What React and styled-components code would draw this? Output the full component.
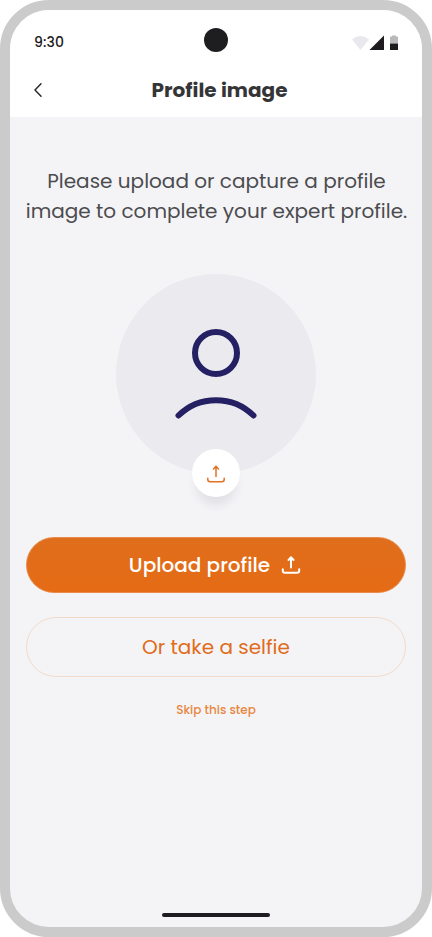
import styled, { createGlobalStyle } from 'styled-components';

const GlobalStyle = createGlobalStyle`
  * {
    box-sizing: border-box;
  }

  body {
    margin: 0;
    background: #ffffff;
    font-family: Poppins, Inter, 'Liberation Sans', sans-serif;
  }

  button {
    font-family: inherit;
    cursor: pointer;
  }
`;

const Phone = styled.div`
  display: flex;
  flex-direction: column;
  width: 432px;
  height: 937px;
  border: 10px solid #cbcbcb;
  border-radius: 49px;
  background: #f4f4f7;
  overflow: hidden;
`;

const Header = styled.header`
  background: #ffffff;
  height: 107px;
`;

const StatusBar = styled.div`
  display: grid;
  grid-template-columns: 1fr 24px 1fr;
  align-items: center;
  height: 60px;
  padding: 0 24px;
`;

const Clock = styled.span`
  padding-top: 4px;
  font-size: 14px;
  font-weight: 500;
  line-height: 20px;
  letter-spacing: 0.1px;
  color: #1d1b20;
`;

const Camera = styled.span`
  width: 24px;
  height: 24px;
  border-radius: 50%;
  background: #1e1e20;
`;

const StatusIcons = styled.svg`
  justify-self: end;
  margin-top: 6px;
`;

const NavBar = styled.div`
  display: grid;
  grid-template-columns: 40px 1fr 33px;
  align-items: center;
  height: 40px;
  padding: 0 8px;
`;

const BackButton = styled.button`
  display: flex;
  justify-content: center;
  padding: 0;
  border: none;
  background: none;
`;

const Title = styled.h1`
  margin: 0;
  text-align: center;
  font-size: 20px;
  font-weight: 700;
  line-height: 30px;
  color: #353538;
`;

const Content = styled.main`
  flex: 1;
  display: flex;
  flex-direction: column;
  align-items: center;
  padding: 49px 16px 0;
`;

const Intro = styled.p`
  margin: 0;
  padding-left: 1px;
  text-align: center;
  font-size: 20px;
  line-height: 30px;
  white-space: nowrap;
  color: #4c4c4f;
`;

const IntroLine = styled.span`
  display: block;
`;

const Avatar = styled.div`
  position: relative;
  display: flex;
  justify-content: center;
  width: 200px;
  height: 200px;
  margin-top: 48px;
  border-radius: 50%;
  background: #ebebef;
`;

const AvatarUpload = styled.button`
  position: absolute;
  left: 76px;
  bottom: -23px;
  display: flex;
  align-items: center;
  justify-content: center;
  width: 48px;
  height: 48px;
  padding: 2px 0 0;
  border: none;
  border-radius: 50%;
  background: #ffffff;
  color: #e27124;
  box-shadow: 0 12px 10px -4px rgba(40, 40, 50, 0.09);
`;

const PrimaryButton = styled.button`
  display: flex;
  align-items: center;
  justify-content: center;
  gap: 9px;
  width: 380px;
  height: 56px;
  margin-top: 63px;
  padding: 0;
  border: 1px solid #e98a48;
  border-radius: 28px;
  background: linear-gradient(#df6e1c, #e66b15);
  font-size: 20px;
  font-weight: 500;
  color: #ffffff;
`;

const SecondaryButton = styled.button`
  width: 380px;
  height: 60px;
  margin-top: 24px;
  padding: 0;
  border: 1px solid #f2dac9;
  border-radius: 30px;
  background: transparent;
  font-size: 20px;
  color: #e06c1a;
`;

const SkipButton = styled.button`
  margin-top: 24px;
  padding: 0;
  border: none;
  background: none;
  font-size: 12px;
  font-weight: 500;
  line-height: 18px;
  color: #e8873f;
`;

const HomeIndicator = styled.div`
  align-self: center;
  width: 108px;
  height: 4px;
  margin-bottom: 10px;
  border-radius: 2px;
  background: #1d1b20;
`;

const UploadIcon = ({ strokeWidth = 1.5 }) => (
  <svg
    width="24"
    height="24"
    viewBox="0 0 24 24"
    fill="none"
    stroke="currentColor"
    strokeWidth={strokeWidth}
    strokeLinecap="round"
    strokeLinejoin="round"
  >
    <path d="M12 14.5V4.5M9.5 7 12 4.3 14.5 7" />
    <path d="M3.8 16.2v1.4c0 1.5.7 2.2 2.2 2.2h12c1.5 0 2.2-.7 2.2-2.2v-1.4" />
  </svg>
);

const App = () => (
  <>
    <GlobalStyle />
    <Phone>
      <Header>
        <StatusBar>
          <Clock>9:30</Clock>
          <Camera />
          <StatusIcons width="46" height="16" viewBox="0 0 46 16">
            {/* wifi */}
            <path d="M0 4.5Q8.5-2.3 17 4.5L8.5 15Z" fill="#e9e9ed" />
            {/* signal */}
            <path d="M32 .5V15H17.5Z" fill="#1d1b20" />
            {/* battery */}
            <path d="M40 .5h4v1h1.5q.5 0 .5.5v6.5h-8V2q0-.5.5-.5H40Z" fill="#b9b9bb" />
            <path d="M38 8.5h8v6q0 .5-.5.5h-7q-.5 0-.5-.5Z" fill="#1d1b20" />
          </StatusIcons>
        </StatusBar>
        <NavBar>
          <BackButton aria-label="Back">
            <svg width="24" height="24" viewBox="0 0 24 24" fill="none" stroke="#29292c" strokeWidth="1.5" strokeLinecap="round" strokeLinejoin="round">
              <path d="M15 5.8 9 12l6 6.2" />
            </svg>
          </BackButton>
          <Title>Profile image</Title>
        </NavBar>
      </Header>

      <Content>
        <Intro>
          <IntroLine>Please upload or capture a profile</IntroLine>
          <IntroLine>image to complete your expert profile.</IntroLine>
        </Intro>

        <Avatar>
          <svg width="200" height="200" viewBox="0 0 200 200" fill="none" stroke="#252063" strokeWidth="6" strokeLinecap="round">
            <circle cx="100" cy="79" r="21" />
            <path d="M62.5 141.5C83 121 117 121 137.5 141.5" />
          </svg>
          <AvatarUpload aria-label="Upload">
            <UploadIcon />
          </AvatarUpload>
        </Avatar>

        <PrimaryButton>
          Upload profile
          <UploadIcon strokeWidth={2} />
        </PrimaryButton>
        <SecondaryButton>Or take a selfie</SecondaryButton>
        <SkipButton>Skip this step</SkipButton>
      </Content>

      <HomeIndicator />
    </Phone>
  </>
);

export default App;
